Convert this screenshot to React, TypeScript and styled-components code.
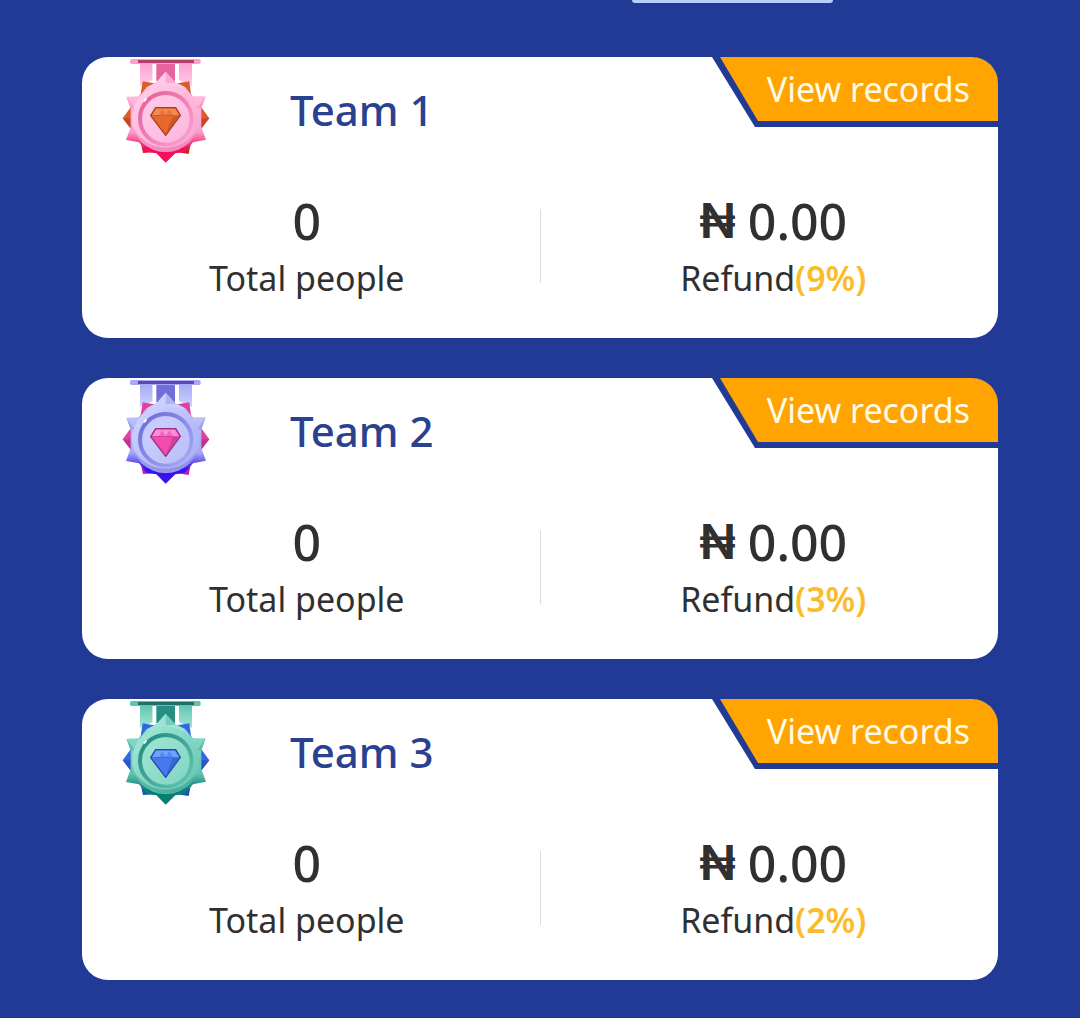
import React from "react";
import styled, { createGlobalStyle } from "styled-components";

const GlobalStyle = createGlobalStyle`
  * { box-sizing: border-box; }
  body {
    margin: 0;
    background: #213a96;
    font-family: "Noto Sans", "Open Sans", sans-serif;
    color: #303030;
  }
`;

const Page = styled.main`
  display: flex;
  flex-direction: column;
  padding: 0 82px 38px;
`;

const TabMarker = styled.div`
  width: 22%;
  height: 3px;
  margin-right: 18%;
  align-self: flex-end;
  border-radius: 0 0 6px 6px;
  background: #b4cffb;
`;

const TeamList = styled.ul`
  display: flex;
  flex-direction: column;
  gap: 40px;
  margin: 54px 0 0;
  padding: 0;
  list-style: none;
`;

const Card = styled.li`
  padding-bottom: 35px;
  border-radius: 26px;
  overflow: hidden;
  background: #fff;
`;

const CardHeader = styled.header`
  display: flex;
  align-items: flex-start;
  height: 142px;
  padding-left: 40px;
`;

const MedalArt = styled.svg`
  flex: none;
  width: 88px;
  height: 107px;
`;

const TeamName = styled.h2`
  flex: 1;
  margin: 24px 0 0 80px;
  font-size: 42px;
  line-height: 58px;
  font-weight: 500;
  color: #2a4190;
`;

const RecordsEdge = styled.div`
  width: 286px;
  height: 70px;
  padding: 0 0 6px 8px;
  background: #213a96;
  clip-path: polygon(0 0, 100% 0, 100% 100%, 43px 100%);
`;

const RecordsButton = styled.button`
  width: 100%;
  height: 100%;
  padding: 0 28px 0 0;
  border: 0;
  border-radius: 0 26px 0 0;
  background: #ffa400;
  clip-path: polygon(0 0, 100% 0, 100% 100%, 38px 100%);
  color: #fffbe8;
  font: 400 34px/64px "Noto Sans", sans-serif;
  text-align: right;
  white-space: nowrap;
  cursor: pointer;
`;

const Stats = styled.div`
  display: grid;
  grid-template-columns: 1fr 1px 1fr;
  column-gap: 8px;
`;

const Stat = styled.div`
  display: flex;
  flex-direction: column;
  align-items: center;
`;

const Value = styled.strong`
  display: flex;
  gap: 12px;
  font-size: 50px;
  line-height: 44px;
  font-weight: 500;
  white-space: nowrap;
`;

const Currency = styled.span`
  font: 600 48px/44px "Inter", sans-serif;
`;

const Label = styled.span`
  margin-top: 10px;
  font-size: 34px;
  line-height: 50px;
  white-space: nowrap;
`;

const Rate = styled.b`
  font-weight: 600;
  color: #fbbc2b;
`;

const Divider = styled.div`
  height: 74px;
  margin-top: 10px;
  background: #dcdcdc;
`;

interface Palette {
  id: string;
  pale: string;
  light: string;
  mid: string;
  deep: string;
  bar: string;
  accent: string;
  accentDark: string;
  gemLight: string;
  gem: string;
  gemDark: string;
}

const ROSE: Palette = {
  id: "rose", pale: "#ffcde8", light: "#fb9fd0", mid: "#e763a0", deep: "#f50f5e", bar: "#b93d6c",
  accent: "#dd5a2c", accentDark: "#d9192c", gemLight: "#f08a55", gem: "#e5692a", gemDark: "#a93d22",
};
const VIOLET: Palette = {
  id: "violet", pale: "#cdd2fd", light: "#a3a9f4", mid: "#726fdc", deep: "#3913ee", bar: "#5f48ac",
  accent: "#e0419f", accentDark: "#c319ae", gemLight: "#f88fd8", gem: "#f14dae", gemDark: "#9d2d85",
};
const TEAL: Palette = {
  id: "teal", pale: "#a0e6d5", light: "#5fc3ae", mid: "#268e84", deep: "#087e74", bar: "#1f6f6c",
  accent: "#3467e6", accentDark: "#1947c9", gemLight: "#72a2fb", gem: "#4679ee", gemDark: "#244ba7",
};

function Medal({ palette: p }: { palette: Palette }) {
  const fill = (name: string) => `url(#${p.id}-${name})`;
  return (
    <MedalArt viewBox="36 21 264 321" aria-hidden="true">
      <defs>
        <linearGradient id={`${p.id}-back`} x1="0" y1="0" x2="0" y2="1">
          <stop offset="0.5" stopColor={p.accent} />
          <stop offset="1" stopColor={p.accentDark} />
        </linearGradient>
        <linearGradient id={`${p.id}-star`} x1="0" y1="0" x2="0" y2="1">
          <stop offset="0" stopColor={p.pale} />
          <stop offset="0.66" stopColor={p.light} />
          <stop offset="0.84" stopColor={p.deep} />
          <stop offset="1" stopColor={p.deep} />
        </linearGradient>
        <linearGradient id={`${p.id}-disc`} x1="0" y1="0" x2="1" y2="1">
          <stop offset="0.1" stopColor={p.pale} />
          <stop offset="1" stopColor={p.light} />
        </linearGradient>
        <linearGradient id={`${p.id}-ring`} x1="0" y1="0" x2="1" y2="1">
          <stop offset="0.1" stopColor={p.mid} />
          <stop offset="0.95" stopColor={p.light} />
        </linearGradient>
        <linearGradient id={`${p.id}-ribbon`} x1="0" y1="0" x2="0" y2="1">
          <stop offset="0" stopColor={p.light} />
          <stop offset="1" stopColor={p.pale} />
        </linearGradient>
      </defs>
      <path d="M90 36H128V90L90 108ZM207 36H246V108L207 90Z" fill={fill("ribbon")} />
      <path d="M128 38H139V88H128ZM195 38H207V88H195Z" fill="#fff" />
      <path d="M139 36H195V94H139Z" fill={p.mid} />
      <rect x="60" y="27" width="212" height="15" rx="5" fill={p.light} />
      <rect x="84" y="30" width="168" height="9" fill={p.bar} />
      <path d="M98 94L132 100L167 88L202 100L238 94L243 132L276 175L298 205L276 234L244 272L236 312L202 307L167 316L132 307L99 309L91 272L60 234L38 205L60 175L92 132Z" fill={fill("back")} />
      <path d="M38 205L64 205L64 236ZM298 205L272 205L272 236Z" fill={p.gemDark} opacity="0.5" />
      <path d="M167 65L195 96L226 112L247 139L287 139L274 176V231L288 269L249 277L225 305L196 310L167 338L139 310L109 305L87 277L48 270L62 231V176L49 140L88 139L110 112L140 96Z" fill={fill("star")} />
      <path d="M167 65L195 96L226 112L167 145L110 112L140 96Z" fill={p.pale} opacity="0.7" />
      <path d="M287 139L274 176L262 174ZM49 140L62 176L74 174ZM167 65L198 98L167 100Z" fill={p.mid} opacity="0.3" />
      <circle cx="167" cy="205" r="101" fill={fill("disc")} />
      <path d="M72 238A101 101 0 0 0 262 238A110 110 0 0 1 72 238Z" fill={p.mid} opacity="0.45" />
      <circle cx="167" cy="206" r="77" fill="none" stroke={fill("ring")} strokeWidth="12" />
      <path d="M102 154L109 145" stroke="#fff" strokeWidth="6" />
      <circle cx="169" cy="208" r="71" fill={p.pale} opacity="0.45" />
      <path d="M137 173H197L211 196L167 256L122 197Z" fill={p.gem} stroke={p.gemDark} strokeWidth="4" strokeLinejoin="round" />
      <path d="M138 176H195L207 195H127Z" fill={p.gemLight} />
      <path d="M147 195L156 178L167 195L178 178L189 195Z" fill={p.gem} opacity="0.65" />
      <path d="M147 197H189L167 251Z" fill={p.gem} />
      <path d="M189 197H207L168 251Z" fill={p.gemDark} opacity="0.4" />
      <path d="M127 197H189" stroke={p.gemDark} strokeWidth="2" opacity="0.5" />
    </MedalArt>
  );
}

const TEAMS = [
  { name: "Team 1", people: 0, refund: "0.00", rate: 9, palette: ROSE },
  { name: "Team 2", people: 0, refund: "0.00", rate: 3, palette: VIOLET },
  { name: "Team 3", people: 0, refund: "0.00", rate: 2, palette: TEAL },
];

export default function App() {
  return (
    <>
      <GlobalStyle />
      <Page>
        <TabMarker />
        <TeamList>
          {TEAMS.map((team) => (
            <Card key={team.name}>
              <CardHeader>
                <Medal palette={team.palette} />
                <TeamName>{team.name}</TeamName>
                <RecordsEdge>
                  <RecordsButton type="button">View records</RecordsButton>
                </RecordsEdge>
              </CardHeader>
              <Stats>
                <Stat>
                  <Value>{team.people}</Value>
                  <Label>Total people</Label>
                </Stat>
                <Divider />
                <Stat>
                  <Value>
                    <Currency>₦</Currency> <span>{team.refund}</span>
                  </Value>
                  <Label>
                    Refund<Rate>({team.rate}%)</Rate>
                  </Label>
                </Stat>
              </Stats>
            </Card>
          ))}
        </TeamList>
      </Page>
    </>
  );
}
